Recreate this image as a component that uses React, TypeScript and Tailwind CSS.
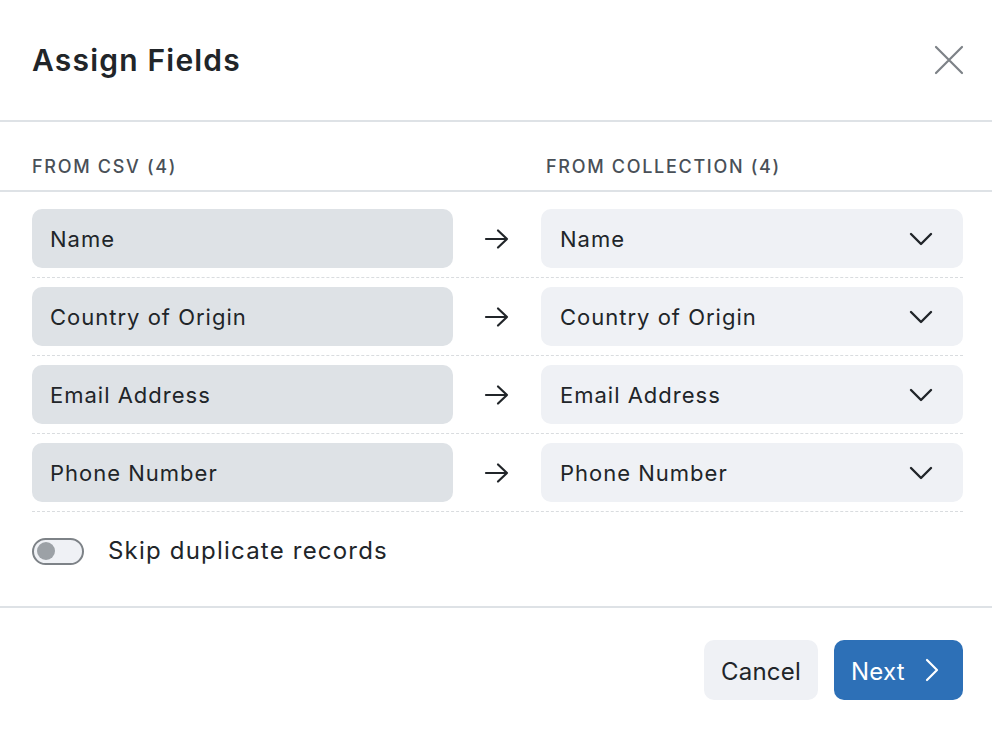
import React from 'react'

const FIELDS = ['Name', 'Country of Origin', 'Email Address', 'Phone Number']

const ArrowRight = () => (
  <svg width="26" height="22" viewBox="0 0 26 22" fill="none" stroke="#212529" strokeWidth="2.2" strokeLinecap="round" strokeLinejoin="round">
    <path d="M2 11h21M14 2.5l9 8.5-9 8.5" />
  </svg>
)

const Chevron = () => (
  <svg width="24" height="14" viewBox="0 0 24 14" fill="none" stroke="#212529" strokeWidth="2.4" strokeLinecap="round" strokeLinejoin="round">
    <path d="M2 2l10 10 10-10" />
  </svg>
)

const App: React.FC = () => {
  return (
    <div className="w-[992px] h-[730px] bg-white text-[#212529] flex flex-col" style={{ fontFamily: 'Inter, "Noto Sans", sans-serif' }}>
      {/* Header */}
      <div className="h-[122px] flex items-center justify-between pl-8 pr-[25px] border-b-2 border-[#dee2e6] shrink-0">
        <h2 className="text-[30px] font-semibold tracking-[1.2px] leading-none">Assign Fields</h2>
        <button className="w-9 h-9 flex items-center justify-center">
          <svg width="30" height="30" viewBox="0 0 30 30" fill="none" stroke="#7d8287" strokeWidth="2.2" strokeLinecap="round">
            <path d="M2 2l26 26M28 2L2 28" />
          </svg>
        </button>
      </div>

      {/* Body */}
      <div className="flex-1 flex flex-col">
        <div className="h-[70px] flex items-center pl-8 pt-5 border-b-2 border-[#dee2e6] text-[18px] font-medium text-[#495057] tracking-[1.7px] uppercase">
          <div className="w-[514px]">From CSV (4)</div>
          <div>From Collection (4)</div>
        </div>

        <div className="pl-8 pr-[29px] pt-[8px]">
          {FIELDS.map((f) => (
            <div key={f} className="flex items-center py-[9px] border-b border-dashed border-[#d9dcdf]">
              <div className="w-[421px] h-[59px] rounded-[10px] bg-[#dee2e6] flex items-center px-[18px] pt-[2px] text-[22px] tracking-[1px]">
                {f}
              </div>
              <div className="w-[88px] flex items-center justify-center">
                <ArrowRight />
              </div>
              <div className="flex-1 h-[59px] rounded-[10px] bg-[#eff1f5] flex items-center justify-between pl-[19px] pr-[30px] text-[22px] tracking-[1px]">
                <span className="pt-[2px]">{f}</span>
                <Chevron />
              </div>
            </div>
          ))}
        </div>

        <div className="px-8 pt-[21px] flex items-center gap-6">
          <div className="w-[52px] h-[27px] rounded-full border-2 border-[#7d8287] bg-[#eff1f5] flex items-center pl-[3px]">
            <div className="w-[18px] h-[18px] rounded-full bg-[#9ca1a6]" />
          </div>
          <span className="text-[24px] tracking-[1.2px]">Skip duplicate records</span>
        </div>
      </div>

      {/* Footer */}
      <div className="h-[124px] border-t-2 border-[#dee2e6] flex items-center justify-end gap-4 pr-[29px] pt-[2px] shrink-0">
        <button className="h-[60px] w-[114px] rounded-[10px] bg-[#eff1f5] text-[24px] tracking-[0.2px] text-[#212529] pt-[3px]">Cancel</button>
        <button className="h-[60px] w-[129px] rounded-[10px] bg-[#2d70b7] text-[24px] tracking-[0.2px] text-white flex items-center pl-[17px] gap-5">
          <span className="pt-[3px]">Next</span>
          <svg width="14" height="24" viewBox="0 0 14 24" fill="none" stroke="white" strokeWidth="2.2" strokeLinecap="round" strokeLinejoin="round">
            <path d="M2 2l10 10-10 10" />
          </svg>
        </button>
      </div>
    </div>
  )
}

export default App
